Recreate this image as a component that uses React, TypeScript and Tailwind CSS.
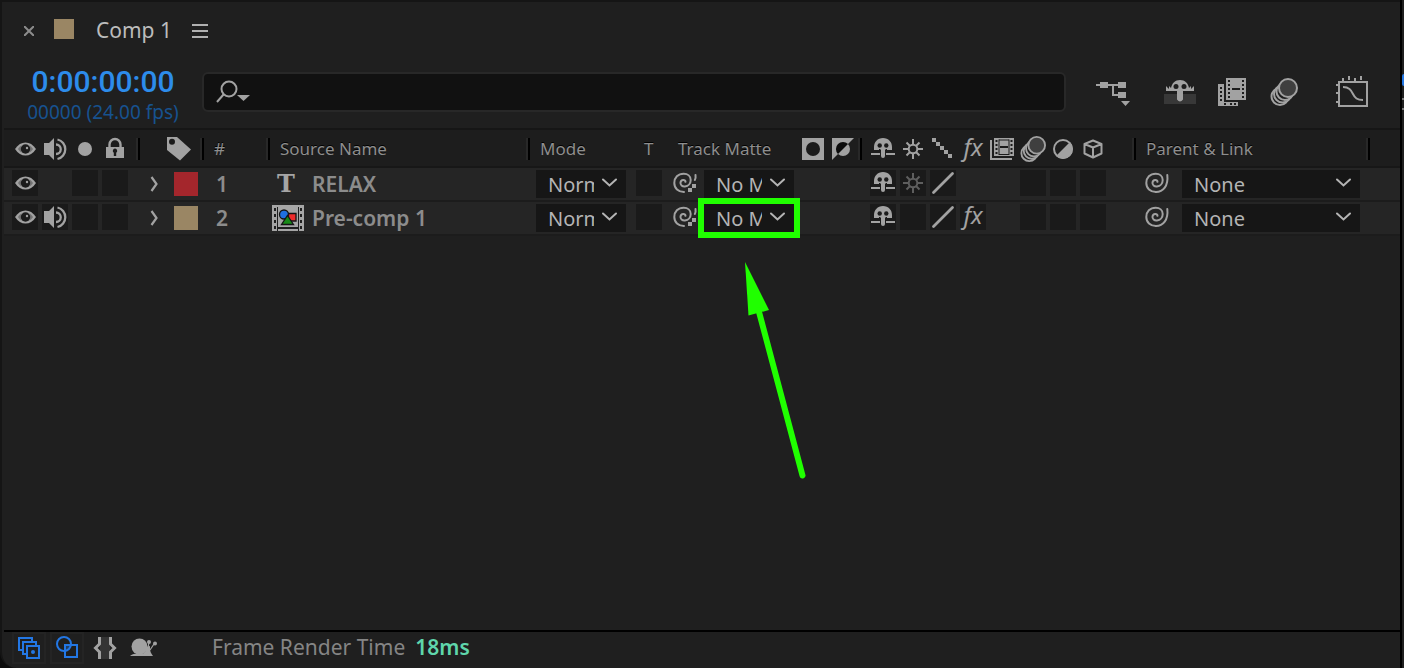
import React, { useState } from 'react';

type IconProps = { className?: string };

interface Layer {
  id: number;
  name: string;
  kind: 'text' | 'comp';
  label: 'red' | 'sand';
  audio: boolean;
  collapse: boolean;
  fx: boolean;
  highlight: boolean;
}

const layers: Layer[] = [
  { id: 1, name: 'RELAX', kind: 'text', label: 'red', audio: false, collapse: true, fx: false, highlight: false },
  { id: 2, name: 'Pre-comp 1', kind: 'comp', label: 'sand', audio: true, collapse: false, fx: true, highlight: true },
];

const labelColors = {
  red: 'bg-[#a4262c]',
  sand: 'bg-[#9a8664]',
};

/* ---------- icons ---------- */

const EyeIcon = () => (
  <svg width="26" height="26" viewBox="0 0 26 26" fill="currentColor">
    <path d="M3 13C6 8.400 9.500 6.400 13.500 6.400S21 8.400 24 13C21 17.600 17.500 19.600 13.500 19.600S6 17.600 3 13Z" />
    <path d="M6 13c1.200-1.900 2.400-3 3.600-3.600v7.200C8.400 16 7.200 14.900 6 13ZM21 13c-1.200-1.900-2.400-3-3.600-3.600v7.200C18.600 16 19.800 14.900 21 13Z" fill="#1b1b1b" opacity=".35" />
    <circle cx="13.500" cy="13" r="4.700" fill="#1b1b1b" />
    <circle cx="15" cy="12" r="1.200" />
  </svg>
);

const SpeakerIcon = () => (
  <svg width="26" height="26" viewBox="0 0 26 26" fill="none">
    <path d="M2 7h5v12H2zM7 7l5-5v22l-5-5z" fill="currentColor" />
    <path d="M14 8.500a4.700 4.700 0 0 1 0 9.500M15.500 3.500a10 10 0 0 1 0 19.500" stroke="currentColor" strokeWidth="2.300" />
  </svg>
);

const SoloIcon = () => (
  <svg width="26" height="26" viewBox="0 0 26 26" fill="currentColor"><circle cx="13" cy="13" r="7" /></svg>
);

const LockIcon = () => (
  <svg width="26" height="26" viewBox="0 0 26 26" fill="none">
    <path d="M7.500 12V8.500a5.500 5.500 0 0 1 11 0V12" stroke="currentColor" strokeWidth="2.400" />
    <path d="M4 11h18v11H4z" fill="currentColor" />
    <path d="M13 12.500a2.300 2.300 0 0 1 1.200 4.200V20h-2.400v-3.300A2.300 2.300 0 0 1 13 12.500z" fill="#1b1b1b" />
  </svg>
);

const TagIcon = () => (
  <svg width="24" height="24" viewBox="0 0 24 24">
    <path d="M0 0h10l14 12.500L13 23.500 0 13z" fill="currentColor" />
    <circle cx="5" cy="4.700" r="3" fill="#1b1b1b" />
  </svg>
);

const ShyIcon = () => (
  <svg width="26" height="26" viewBox="0 0 26 26" fill="currentColor">
    <path d="M4 14V11C4 6 7.500 2 13 2s9 4 9 9v3z" />
    <path d="M11 13h4v7a2 2 0 0 1-4 0zM1 17h9v2H1zM16 17h9v2h-9z" />
    <circle cx="9.700" cy="9.500" r="2.200" fill="#1b1b1b" />
    <circle cx="16.300" cy="9.500" r="2.200" fill="#1b1b1b" />
    <path d="M9 13h1.500v2H9zM15.500 13H17v2h-1.500z" fill="#1b1b1b" />
  </svg>
);

const SunIcon = ({ className }: IconProps) => (
  <svg width="26" height="26" viewBox="0 0 26 26" fill="none" stroke="currentColor" strokeWidth="2" className={className}>
    <circle cx="13" cy="13" r="4.300" />
    <path d="M13 3v6M13 17v6M3 13h6M17 13h6M6.500 6.500l3.500 3.500M16 16l3.500 3.500M19.500 6.500 16 10M10 16l-3.500 3.500" />
  </svg>
);

const StairsIcon = () => (
  <svg width="26" height="26" viewBox="0 0 26 26" fill="currentColor">
    <path d="M2 2h4v4H2zM6 6h4v4H6zM10 10h4v4h-4zM14 14h4v4h-4zM18 18h4v4h-4z" />
  </svg>
);

const SlashIcon = () => (
  <svg width="26" height="26" viewBox="0 0 26 26" stroke="currentColor" strokeWidth="2.800" strokeLinecap="round">
    <path d="M3.500 22.500 22.500 3.500" />
  </svg>
);

const FxIcon = () => (
  <span className="block w-[26px] pb-1 text-center text-[24px] leading-[22px] italic [text-shadow:none]">fx</span>
);

const FrameBlendIcon = () => (
  <svg width="26" height="26" viewBox="0 0 26 26" fill="none">
    <path d="M1 4v19h21" stroke="currentColor" strokeWidth="2" />
    <path d="M4 2h20v18H4z" fill="currentColor" />
    <path d="M5.500 4h2v2h-2zM5.500 8h2v2h-2zM5.500 12h2v2h-2zM5.500 16h2v2h-2zM20.500 4h2v2h-2zM20.500 8h2v2h-2zM20.500 12h2v2h-2zM20.500 16h2v2h-2zM10 10h8v2h-8z" fill="#1b1b1b" />
    <path d="M9 3.500v15.500M19 3.500v15.500M9 4h10M9 18.500h10" stroke="#1b1b1b" strokeWidth="1" />
  </svg>
);

const MotionBlurIcon = ({ className }: IconProps) => (
  <svg viewBox="0 0 28 28" stroke="currentColor" strokeWidth="2" fill="#1e1e1e" className={className}>
    <circle cx="10" cy="18.500" r="8.500" />
    <circle cx="12.500" cy="16" r="8.500" />
    <circle cx="15" cy="13.500" r="8.500" />
    <circle cx="18" cy="10" r="9" fill="#3f3f3f" />
  </svg>
);

const AdjustIcon = () => (
  <svg width="26" height="26" viewBox="0 0 26 26" fill="none">
    <circle cx="13" cy="13" r="9" stroke="currentColor" strokeWidth="2" />
    <path d="M20 6A9.500 9.500 0 0 1 6 20z" fill="currentColor" />
  </svg>
);

const CubeIcon = () => (
  <svg width="26" height="26" viewBox="0 0 26 26" fill="none" stroke="currentColor" strokeWidth="2" strokeLinejoin="round">
    <path d="M13 4.500 21.500 8v9.500L13 21.500 4.500 17.500V8zM4.500 8 13 11.500 21.500 8M13 11.500v10" />
  </svg>
);

const MatteIcon = () => (
  <svg width="22" height="22" viewBox="0 0 22 22">
    <path d="M0 0h22v22H0z" fill="currentColor" />
    <circle cx="11" cy="11" r="7" fill="#1b1b1b" />
  </svg>
);

const InvertMatteIcon = () => (
  <svg width="22" height="22" viewBox="0 0 22 22">
    <path d="M0 0h22L0 22z" fill="currentColor" />
    <circle cx="11" cy="11" r="7" fill="currentColor" />
    <path d="M16 6 6 16A7 7 0 0 1 16 6z" fill="#0c0c0c" />
  </svg>
);

const PickWhipIcon = ({ matte = false }: { matte?: boolean }) => (
  <svg width="26" height="26" viewBox="0 0 26 26" fill="none" stroke="currentColor" strokeWidth="2" strokeLinecap="round">
    <path d="M13.500 11.800C13.300 9.500 9 9.300 8.500 12.500c-.4 2.500 1.800 4.300 4.500 4 3.300-.3 5.700-3 5.700-6.600 0-3.700-3-6.200-7-6.200C6 3.700 2.300 7.600 2.300 13c0 5.300 4 9 9.700 9" />
    {matte ? (
      <>
        <path d="M23.500 5c.3 2 .2 3.500-.7 5" />
        <path d="M20 14h4v4h-4zM16 18h4v4h-4z" fill="currentColor" stroke="none" />
      </>
    ) : (
      <path d="M12 22C19 22 24.500 16 23.300 5" />
    )}
  </svg>
);

const ChevronDown = ({ className }: IconProps) => (
  <svg width="16" height="10" viewBox="0 0 16 10" fill="none" stroke="currentColor" strokeWidth="2" strokeLinecap="round" className={className}>
    <path d="m1 1.500 6.500 6 6.500-6" />
  </svg>
);

const ChevronRight = () => (
  <svg width="8" height="16" viewBox="0 0 8 16" fill="none" stroke="currentColor" strokeWidth="2.200">
    <path d="m1.500 1 5 7-5 7" />
  </svg>
);

const PreCompIcon = () => (
  <svg width="32" height="26" viewBox="0 0 32 26">
    <path d="M0 0h32v26H0z" fill="#a5a5a5" />
    <path d="M2 3h2v3H2zM2 9h2v3H2zM2 15h2v3H2zM2 21h2v3H2zM28 3h2v3h-2zM28 9h2v3h-2zM28 15h2v3h-2zM28 21h2v3h-2zM5 2h1v24H5zM26 2h1v24h-1zM6 22h20v2H6z" fill="#1f1f1f" />
    <path d="M16.500 8.500H24V16h-7.500z" fill="#ee2c2c" stroke="#151515" strokeWidth="1.300" />
    <circle cx="12" cy="9.500" r="4.500" fill="#1f6fe0" stroke="#151515" strokeWidth="1.300" />
    <path d="M15.500 10.500 21.500 19.500h-12z" fill="#178a17" stroke="#151515" strokeWidth="1.300" />
  </svg>
);

const FlowchartIcon = () => (
  <svg width="34" height="28" viewBox="0 0 34 28" fill="currentColor">
    <path d="M0 6h24v2H0z" />
    <path d="M4 4h8v6H4zM22 4h8v6h-8zM22 14h8v6h-8zM16 7h2v11h-2zM17 16h6v2h-6zM25 23h9l-4.500 5z" />
  </svg>
);

const ShyToolIcon = () => (
  <svg width="32" height="26" viewBox="0 0 32 26">
    <path d="M0 15h32v10H0z" fill="#383838" />
    <path d="M7 9C8 4 11 1 16 1s8 3 9 8l2-2v3l3-3v5H2V7l3 3V7zM13 11h6v9.500q-3 4-6 0z" fill="currentColor" />
    <circle cx="12" cy="7.500" r="2.500" fill="#1e1e1e" />
    <circle cx="20" cy="7.500" r="2.500" fill="#1e1e1e" />
  </svg>
);

const FilmToolIcon = () => (
  <svg width="28" height="28" viewBox="0 0 28 28">
    <path d="M0 6h6v18h14v4H0zM8 0h20v22H8z" fill="currentColor" />
    <path d="M2 9h2v2H2zM2 13h2v2H2zM2 17h2v2H2zM2 21h2v2H2zM6 25h2v2H6zM12 25h2v2h-2zM16 25h2v2h-2zM10 2h2v2h-2zM10 6h2v2h-2zM10 10h2v2h-2zM10 14h2v2h-2zM10 18h2v2h-2zM24 2h2v2h-2zM24 6h2v2h-2zM24 10h2v2h-2zM24 14h2v2h-2zM24 18h2v2h-2zM14 10h8v2h-8z" fill="#1e1e1e" />
  </svg>
);

const GraphIcon = () => (
  <svg width="32" height="32" viewBox="0 0 32 32" fill="none" stroke="currentColor" strokeWidth="2">
    <path d="M3 6h28v24H3zM7 2v4M13 0v4M19 2v4M25 0v4M0 9h3M0 17h3M0 26h3" />
    <path d="M7 11c6 0 8 3 10 7s4 6 10 6" />
  </svg>
);

const LayersIcon = () => (
  <svg width="22" height="22" viewBox="0 0 22 22" fill="none" stroke="currentColor" strokeWidth="2">
    <path d="M5 13H1V1h13v4M9 17H5V5h13v4M9 9h12v12H9z" />
    <circle cx="15" cy="15" r="2" fill="currentColor" stroke="none" />
  </svg>
);

const ModesIcon = () => (
  <svg width="22" height="22" viewBox="0 0 22 22" fill="none" stroke="currentColor" strokeWidth="2">
    <circle cx="8" cy="8" r="7" />
    <path d="M9 9h12v12H9z" />
    <path d="M9 9h6a7 7 0 0 1-6 6z" fill="currentColor" opacity=".35" stroke="none" />
  </svg>
);

const BracesIcon = () => (
  <svg width="24" height="22" viewBox="0 0 24 22" fill="none">
    <path d="M7 0h10v22H7z" fill="#343434" />
    <path d="M6.500 0v7l-4 4 4 4v7M17.500 0v7l4 4-4 4v7" stroke="currentColor" strokeWidth="3" />
  </svg>
);

const SnailIcon = () => (
  <svg width="27" height="20" viewBox="0 0 27 20" fill="currentColor">
    <circle cx="9.500" cy="8.500" r="8" />
    <path d="M0 18c2-2 6-3 10-2 5 0 6-3 6-7l4-1c0 4 0 6 3 10z" />
    <path d="m18 11 1-8M20 12l4-6" stroke="currentColor" strokeWidth="1.200" />
    <circle cx="19" cy="4" r="2" />
    <circle cx="25" cy="5.500" r="2" />
  </svg>
);

/* ---------- small parts ---------- */

const Divider = () => (
  <span className="ml-auto h-[22px] w-1 shrink-0 border-r-2 border-l-2 border-r-black border-l-[#282828]" />
);

const HeadCell = ({ children, className = '' }: { children?: React.ReactNode; className?: string }) => (
  <th scope="col" className="p-0 text-left font-normal">
    <div className={`flex h-[36px] items-center pt-[2px] ${className}`}>{children}<Divider /></div>
  </th>
);

const Slot = ({ label, children }: { label: string; children?: React.ReactNode }) => (
  <button type="button" aria-label={label} className="size-[26px] shrink-0 bg-[#1a1a1a]">{children}</button>
);

const Blank = () => <span className="size-[26px] shrink-0" />;

const Dropdown = ({ label, options, className }: { label: string; options: string[]; className: string }) => {
  const [value, setValue] = useState(options[0]);
  return (
    <div className={`relative h-7 shrink-0 ${className}`}>
      <select
        aria-label={label}
        value={value}
        onChange={(e) => setValue(e.target.value)}
        className="h-7 w-full appearance-none bg-[#161616] pr-8 pl-3 text-[20px] text-[#b4b4b4] outline-none"
      >
        {options.map((o) => <option key={o}>{o}</option>)}
      </select>
      <ChevronDown className="pointer-events-none absolute top-2 right-2 text-[#b4b4b4]" />
    </div>
  );
};

// green box around the matte menu and the arrow pointing up at it
const Callout = () => (
  <>
    <span className="pointer-events-none absolute -inset-[6px] z-10 border-[6px] border-[#20ff00]" />
    <svg width="70" height="220" viewBox="0 0 70 220" className="pointer-events-none absolute top-14 left-9 z-10">
      <path d="M5 2 29 50 8.500 55.500z" fill="#20ff00" />
      <path d="M18.500 50 62.500 215.500" stroke="#20ff00" strokeWidth="6" strokeLinecap="round" />
    </svg>
  </>
);

const LayerRow = ({ layer }: { layer: Layer }) => (
  <tr className="border-b-2 border-[#1c1c1c] bg-[#252525]">
    <td className="p-0">
      <div className="flex h-8 gap-1 pt-[2px] pl-2">
        <Slot label={`Video, layer ${layer.id}`}><EyeIcon /></Slot>
        {layer.audio ? <Slot label={`Audio, layer ${layer.id}`}><SpeakerIcon /></Slot> : <Blank />}
        <Slot label={`Solo, layer ${layer.id}`} />
        <Slot label={`Lock, layer ${layer.id}`} />
      </div>
    </td>
    <td className="p-0">
      <div className="flex h-8 items-center gap-4 pl-[10px]">
        <button type="button" aria-label={`Expand ${layer.name}`}><ChevronRight /></button>
        <span className={`size-6 ${labelColors[layer.label]}`} />
      </div>
    </td>
    <td className="p-0 pl-3 text-[21px] leading-8 font-semibold text-[#8c8c8c]">{layer.id}</td>
    <td className="p-0">
      <div className="flex h-8 items-center gap-2 pl-[2px] text-[21px] leading-8 font-semibold text-[#8c8c8c]">
        {layer.kind === 'comp' ? (
          <PreCompIcon />
        ) : (
          <span className="w-8 pr-1 text-center font-['DejaVu_Serif'] text-[24px] font-bold text-[#a5a5a5]">T</span>
        )}
        {layer.name}
      </div>
    </td>
    <td className="p-0">
      <div className="flex h-8 pt-[2px] pl-[6px]">
        <Dropdown label={`Mode, layer ${layer.id}`} options={['Normal', 'Multiply', 'Screen']} className="w-[90px]" />
        <div className="ml-[10px] flex gap-[10px]">
          <Slot label={`Preserve transparency, layer ${layer.id}`} />
          <button type="button" aria-label={`Matte pick whip, layer ${layer.id}`} className="size-[26px]"><PickWhipIcon matte /></button>
        </div>
        <div className="relative ml-[6px] h-7">
          <Dropdown label={`Track matte, layer ${layer.id}`} options={['No Matte', 'RELAX', 'Pre-comp 1']} className="w-[90px]" />
          {layer.highlight && <Callout />}
        </div>
      </div>
    </td>
    <td className="p-0">
      <div className="flex h-8 gap-1 pt-[2px] pl-2">
        <Slot label={`Shy, layer ${layer.id}`}><ShyIcon /></Slot>
        <Slot label={`Collapse, layer ${layer.id}`}>{layer.collapse && <SunIcon className="text-[#5e5e5e]" />}</Slot>
        <Slot label={`Quality, layer ${layer.id}`}><SlashIcon /></Slot>
        {layer.fx ? <Slot label={`Effects, layer ${layer.id}`}><FxIcon /></Slot> : <Blank />}
        <Blank />
        <Slot label={`Motion blur, layer ${layer.id}`} />
        <Slot label={`Adjustment, layer ${layer.id}`} />
        <Slot label={`3D, layer ${layer.id}`} />
      </div>
    </td>
    <td className="p-0">
      <div className="flex h-8 gap-3 pt-[2px] pl-2">
        <button type="button" aria-label={`Parent pick whip, layer ${layer.id}`} className="size-[26px]"><PickWhipIcon /></button>
        <Dropdown label={`Parent, layer ${layer.id}`} options={['None', 'RELAX', 'Pre-comp 1']} className="w-[178px]" />
      </div>
    </td>
    <td className="p-0" />
  </tr>
);

export default function App() {
  const [query, setQuery] = useState('');

  return (
    <div className="flex h-screen bg-[#0c0c0c] font-['Noto_Sans',sans-serif] text-[#a2a2a2]">
      <main className="flex min-w-0 flex-1 flex-col rounded-bl-2xl border-t-2 border-l-2 border-[#151515] bg-[#1f1f1f] pl-[2px]">
        {/* tab */}
        <div className="flex h-[58px] items-center pl-5">
          <button type="button" aria-label="Close tab">
            <svg width="10" height="10" viewBox="0 0 10 10" stroke="#8c8c8c" strokeWidth="2"><path d="m0 0 10 10M10 0 0 10" /></svg>
          </button>
          <span className="mb-1 ml-5 size-5 bg-[#9a8664]" />
          <span className="ml-[22px] text-[21px] text-[#bcbcbc]">Comp 1</span>
          <button type="button" aria-label="Panel menu" className="ml-5">
            <svg width="16" height="14" viewBox="0 0 16 14" fill="#b0b0b0"><path d="M0 0h16v2H0zM0 6h16v2H0zM0 12h16v2H0z" /></svg>
          </button>
        </div>

        {/* timecode, search, switches */}
        <div className="flex h-[68px] items-center pr-8">
          <div className="flex h-full w-[198px] shrink-0 flex-col items-center pt-1">
            <span className="font-['Roboto',sans-serif] text-[30px] leading-9 font-medium text-[#2d8ceb]">0:00:00:00</span>
            <span className="text-[19px] leading-6 text-[#17528f]">00000 (24.00 fps)</span>
          </div>
          <label className="mb-1 flex h-10 min-w-0 flex-1 items-center rounded-md border-2 border-[#282828] bg-[#111] pl-3">
            <svg width="34" height="24" viewBox="0 0 34 24" fill="none" stroke="currentColor" strokeWidth="2" className="shrink-0">
              <circle cx="13" cy="9" r="7.500" />
              <path d="M7.500 14.500 1 22" />
              <path d="M21 15h13l-6.500 6z" fill="currentColor" stroke="none" />
            </svg>
            <input
              type="text"
              aria-label="Search layers"
              value={query}
              onChange={(e) => setQuery(e.target.value)}
              className="h-full min-w-0 flex-1 bg-transparent px-2 text-[20px] outline-none"
            />
          </label>
          <div className="mb-1 ml-[30px] flex shrink-0 items-center">
            <button type="button" aria-label="Mini-flowchart"><FlowchartIcon /></button>
            <button type="button" aria-label="Hide shy layers" className="ml-[34px]"><ShyToolIcon /></button>
            <button type="button" aria-label="Frame blending" className="ml-[22px]"><FilmToolIcon /></button>
            <button type="button" aria-label="Motion blur" className="ml-6"><MotionBlurIcon className="size-7" /></button>
            <button type="button" aria-label="Graph editor" className="ml-[38px]"><GraphIcon /></button>
          </div>
        </div>

        {/* layers */}
        <div className="min-h-0 flex-1 border-t-2 border-[#161616]">
          <table className="w-full table-fixed border-collapse">
            <colgroup>
              <col className="w-[136px]" />
              <col className="w-[64px]" />
              <col className="w-[66px]" />
              <col />
              <col className="w-[332px]" />
              <col className="w-[274px]" />
              <col className="w-[234px]" />
              <col className="w-[30px]" />
            </colgroup>
            <thead>
              <tr className="border-b-2 border-[#171717] bg-[#1d1d1d] text-[17px] text-[#8e8e8e] [text-shadow:0_-1px_0_#000]">
                <HeadCell className="gap-1 pl-2 text-[#a2a2a2]"><EyeIcon /><SpeakerIcon /><SoloIcon /><LockIcon /></HeadCell>
                <HeadCell className="pl-[27px] text-[#a2a2a2]"><TagIcon /></HeadCell>
                <HeadCell className="pl-[10px]">#</HeadCell>
                <HeadCell className="pl-[10px]">Source Name</HeadCell>
                <HeadCell className="pl-[10px]">
                  <span className="w-[104px]">Mode</span>
                  <span className="w-[34px]">T</span>
                  <span className="w-[124px]">Track Matte</span>
                  <span className="flex gap-2 text-[#a2a2a2]"><MatteIcon /><InvertMatteIcon /></span>
                </HeadCell>
                <HeadCell className="gap-1 pl-2 text-[#a2a2a2]">
                  <ShyIcon /><SunIcon /><StairsIcon /><FxIcon /><FrameBlendIcon />
                  <MotionBlurIcon className="size-[26px]" /><AdjustIcon /><CubeIcon />
                </HeadCell>
                <HeadCell className="pl-[10px]">Parent &amp; Link</HeadCell>
                <th className="p-0" />
              </tr>
            </thead>
            <tbody>
              {layers.map((layer) => <LayerRow key={layer.id} layer={layer} />)}
            </tbody>
          </table>
        </div>

        {/* status bar */}
        <footer className="flex h-[38px] shrink-0 items-center border-t-2 border-black pb-1 pl-2 text-[21px]">
          <button type="button" aria-label="Layer switches" className="flex h-8 w-[34px] items-center justify-center border-2 border-[#242424] text-[#2377e4]"><LayersIcon /></button>
          <button type="button" aria-label="Transfer controls" className="ml-1 flex h-8 w-[34px] items-start justify-center border-2 border-[#242424] pt-[2px] text-[#2377e4]"><ModesIcon /></button>
          <button type="button" aria-label="In and out points" className="ml-[9px]"><BracesIcon /></button>
          <button type="button" aria-label="Render time" className="ml-[13px]"><SnailIcon /></button>
          <span className="ml-[55px] text-[#858585]">Frame Render Time</span>
          <span className="ml-[10px] font-semibold text-[#5fd6ab]">18ms</span>
        </footer>
      </main>

      {/* edge of the neighbouring time ruler */}
      <aside className="flex w-1 shrink-0 flex-col border-l-2 border-black bg-[#1f1f1f]">
        <span className="mt-[74px] h-3 rounded-l-full bg-[#2377e4]" />
        <span className="mt-3 h-3 border-y-2 border-[#777]" />
      </aside>
    </div>
  );
}
